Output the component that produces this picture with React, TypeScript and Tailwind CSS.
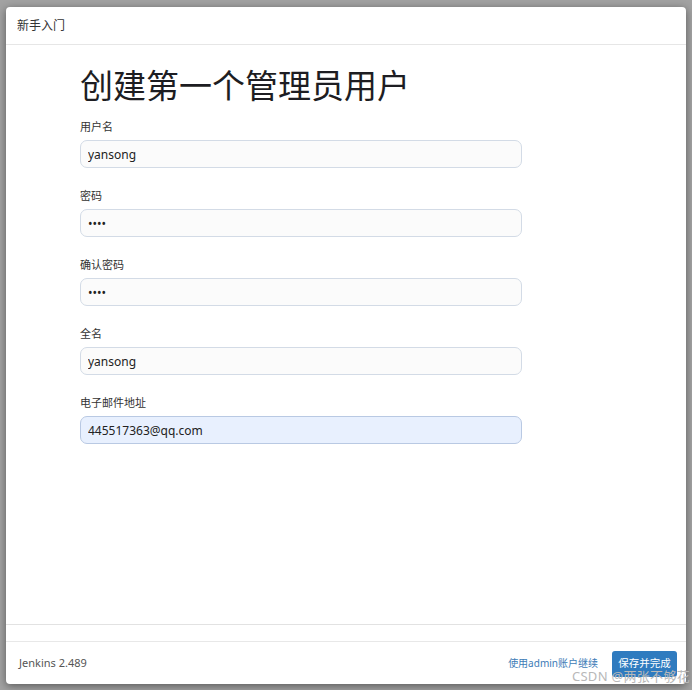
import React from 'react';

const font = { fontFamily: '"Noto Sans", "Noto Sans CJK SC", sans-serif' };

interface FieldProps {
  label: string;
  value: string;
  type?: string;
  autofill?: boolean;
}

function Field({ label, value, type = 'text', autofill }: FieldProps) {
  return (
    <div className="mb-[20px]">
      <label className="block text-[11px] leading-[16px] text-[#333] mb-[5px]">{label}</label>
      <input
        type={type}
        defaultValue={value}
        readOnly
        className={
          'block w-[442px] h-[28px] rounded-[7px] border px-[7px] text-[12px] text-[#222] outline-none ' +
          (autofill ? 'bg-[#e8f0fe] border-[#b9c9e3]' : 'bg-[#fbfbfb] border-[#d3dbe6]')
        }
      />
    </div>
  );
}

export default function App() {
  return (
    <div className="h-[690px] w-[692px] bg-[#a2a2a2] pt-[7px] pb-[6px] px-[6px]" style={font}>
      <div className="relative h-full bg-white rounded-[4px] shadow-[0_2px_8px_rgba(0,0,0,0.45)] flex flex-col">
        <div className="h-[38px] border-b border-[#e6e6e6] flex items-center pl-[11px] text-[12px] text-[#333]">
          新手入门
        </div>
        <div className="flex-1 pl-[74px] pt-[21px]">
          <h1 className="text-[33px] leading-[40px] font-normal text-[#1d1d22] mb-[13px]">创建第一个管理员用户</h1>
          <Field label="用户名" value="yansong" />
          <Field label="密码" value="1234" type="password" />
          <Field label="确认密码" value="1234" type="password" />
          <Field label="全名" value="yansong" />
          <Field label="电子邮件地址" value="445517363@qq.com" autofill />
        </div>
        <div className="h-[17px] border-t border-[#e2e2e2]" />
        <div className="h-[43px] border-t border-[#e8e8e8] flex items-center pl-[13px] pr-[9px]">
          <span className="text-[11px] text-[#555]">Jenkins 2.489</span>
          <span className="ml-auto text-[10px] text-[#3c7bb6]">使用admin账户继续</span>
          <button className="ml-[14px] h-[26px] w-[65px] rounded-[3px] bg-[#2f7bbf] text-white text-[10.5px] mt-[2px]">
            保存并完成
          </button>
        </div>
        <div className="absolute right-[-4px] bottom-[-1px] text-[13px] leading-[17px] text-[#b8b8b8] tracking-[0.3px] pointer-events-none">
          CSDN @两张不够花
        </div>
      </div>
    </div>
  );
}
